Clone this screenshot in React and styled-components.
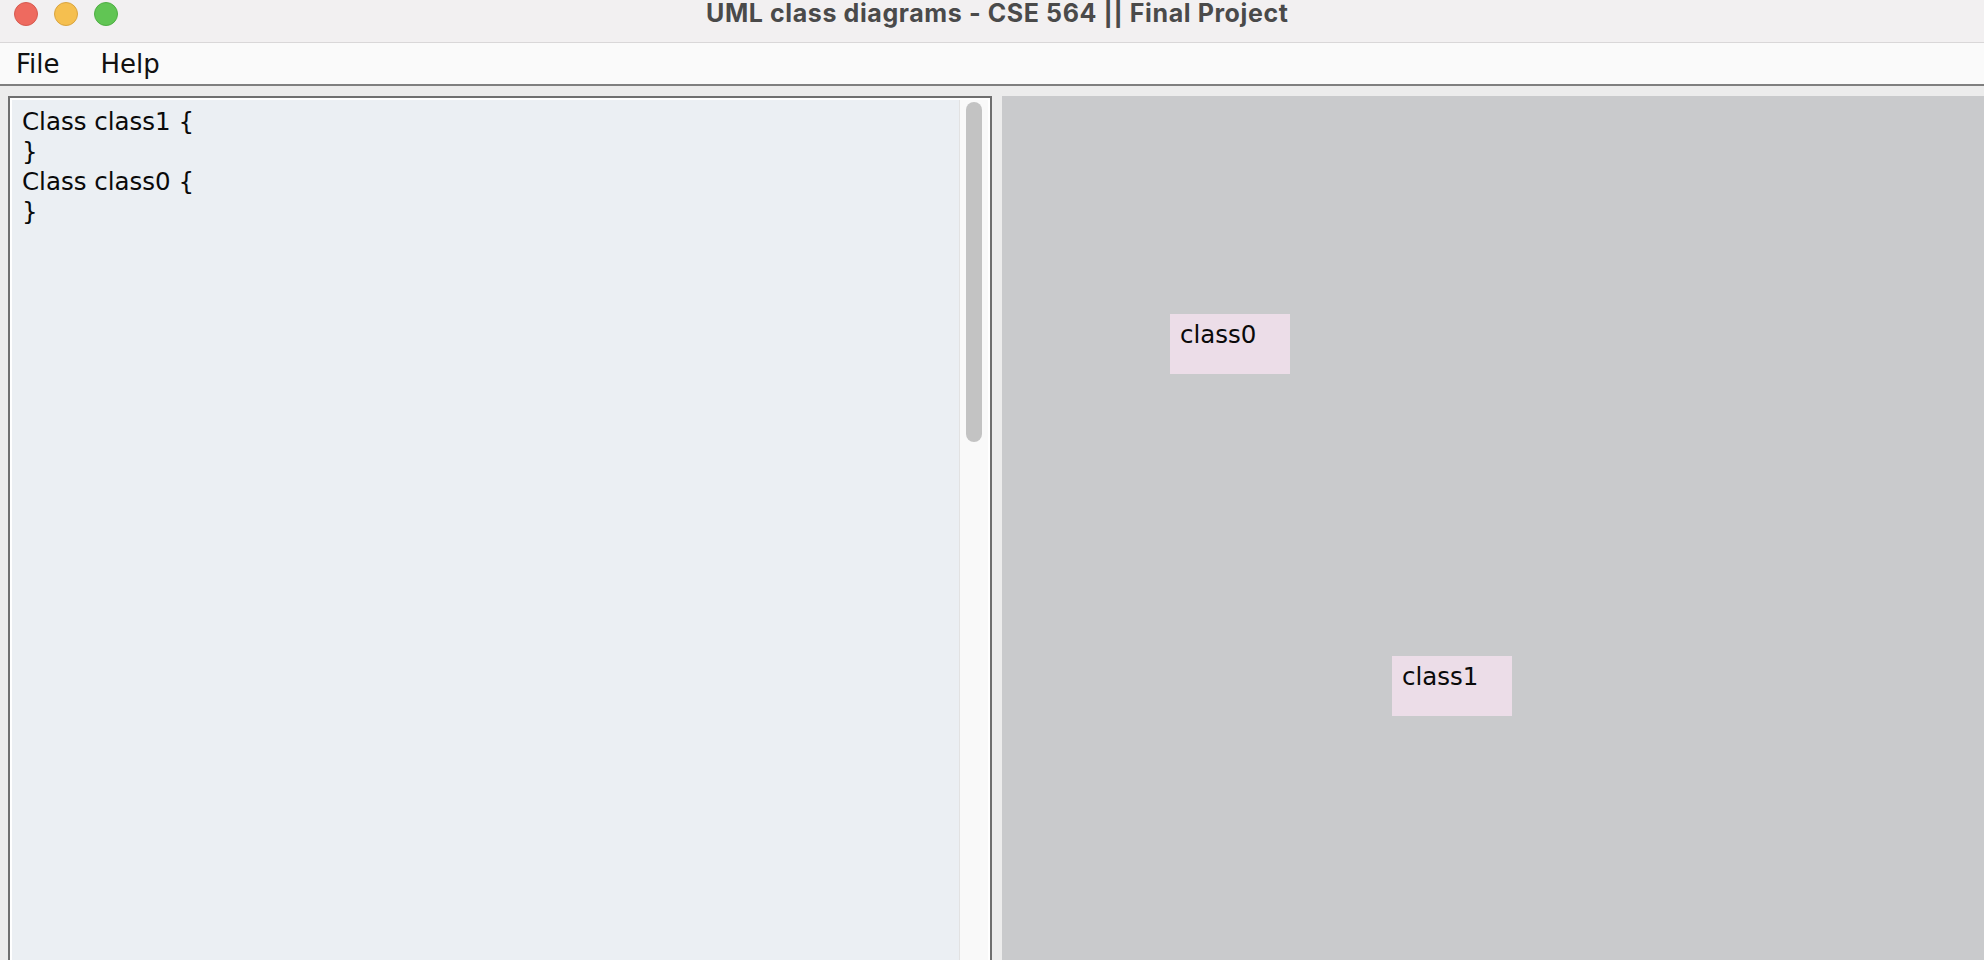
import React from 'react';
import styled, {createGlobalStyle} from 'styled-components';

const Global = createGlobalStyle`
  html, body { margin:0; padding:0; background:#ececec; overflow:hidden; }
  #root { height:960px; }
`;

const Window = styled.div`
  height:960px; width:1984px;
  display:flex; flex-direction:column;
  background:#ececec;
`;
const TitleBar = styled.div`
  height:42px; flex:none;
  box-sizing:content-box;
  display:flex; align-items:flex-start;
  background:#f2f0f1;
  border-bottom:1px solid #d9d7d8;
  padding-left:14px;
`;
const Lights = styled.div`
  display:flex; gap:16px;
  margin-top:2px;
`;
const Light = styled.span`
  width:24px; height:24px; border-radius:50%;
  box-sizing:border-box;
  background:${p=>p.c};
  border:1px solid ${p=>p.b};
`;
const Title = styled.div`
  margin-left:588px;
  font-family:Inter, "Liberation Sans", sans-serif;
  font-weight:700; font-size:25px; line-height:26px;
  letter-spacing:0.6px;
  color:#4a4a4a;
  white-space:nowrap;
`;
const MenuBar = styled.div`
  height:41px; flex:none;
  display:flex; align-items:center;
  background:#fafafa;
  border-bottom:2px solid #7f7f7f;
  padding-left:16px; gap:41px;
  font-family:"DejaVu Sans", sans-serif;
  font-size:26px; color:#111;
`;
const MenuItem = styled.span``;
const Main = styled.div`
  flex:1; min-height:0;
  display:flex; gap:10px;
  padding:10px 0 0 8px;
  overflow:hidden;
`;
const EditorPanel = styled.div`
  width:984px; height:880px; flex:none;
  box-sizing:border-box;
  border:2px solid #6f6f6f;
  padding:2px;
  background:#fff;
  display:flex;
`;
const Code = styled.pre`
  flex:1; margin:0;
  padding:7px 10px;
  background:#ebeff3;
  font-family:"DejaVu Sans", sans-serif;
  font-size:24.5px; line-height:30px;
  color:#0a0a0a;
`;
const Track = styled.div`
  width:29px; flex:none;
  background:#f9f9f9;
  border-left:1px solid #e2e2e2;
  padding:2px 6px 0;
  box-sizing:border-box;
`;
const Thumb = styled.div`
  width:16px; height:340px;
  border-radius:8px;
  background:#c3c3c3;
`;
const Canvas = styled.div`
  flex:1; position:relative;
  background:#c9cacc;
`;
const ClassBox = styled.div`
  position:absolute;
  width:120px; height:60px;
  box-sizing:border-box;
  padding:9px 10px;
  background:#ecdde8;
  font-family:"DejaVu Sans", sans-serif;
  font-size:24.5px; line-height:24px;
  color:#0a0a0a;
`;

const source = `Class class1 {
}
Class class0 {
}`;

const classes = [
  {name:'class0', x:168, y:218},
  {name:'class1', x:390, y:560},
];

export default function App() {
  return (
    <Window>
      <Global/>
      <TitleBar>
        <Lights>
          <Light c="#ee6a5f" b="#d65a50"/>
          <Light c="#f5bf4f" b="#d9a440"/>
          <Light c="#61c554" b="#4fae44"/>
        </Lights>
        <Title>UML class diagrams - CSE 564 || Final Project</Title>
      </TitleBar>
      <MenuBar>
        <MenuItem>File</MenuItem>
        <MenuItem>Help</MenuItem>
      </MenuBar>
      <Main>
        <EditorPanel>
          <Code>{source}</Code>
          <Track><Thumb/></Track>
        </EditorPanel>
        <Canvas>
          {classes.map(c=>(
            <ClassBox key={c.name} style={{left:c.x, top:c.y}}>{c.name}</ClassBox>
          ))}
        </Canvas>
      </Main>
    </Window>
  );
}
